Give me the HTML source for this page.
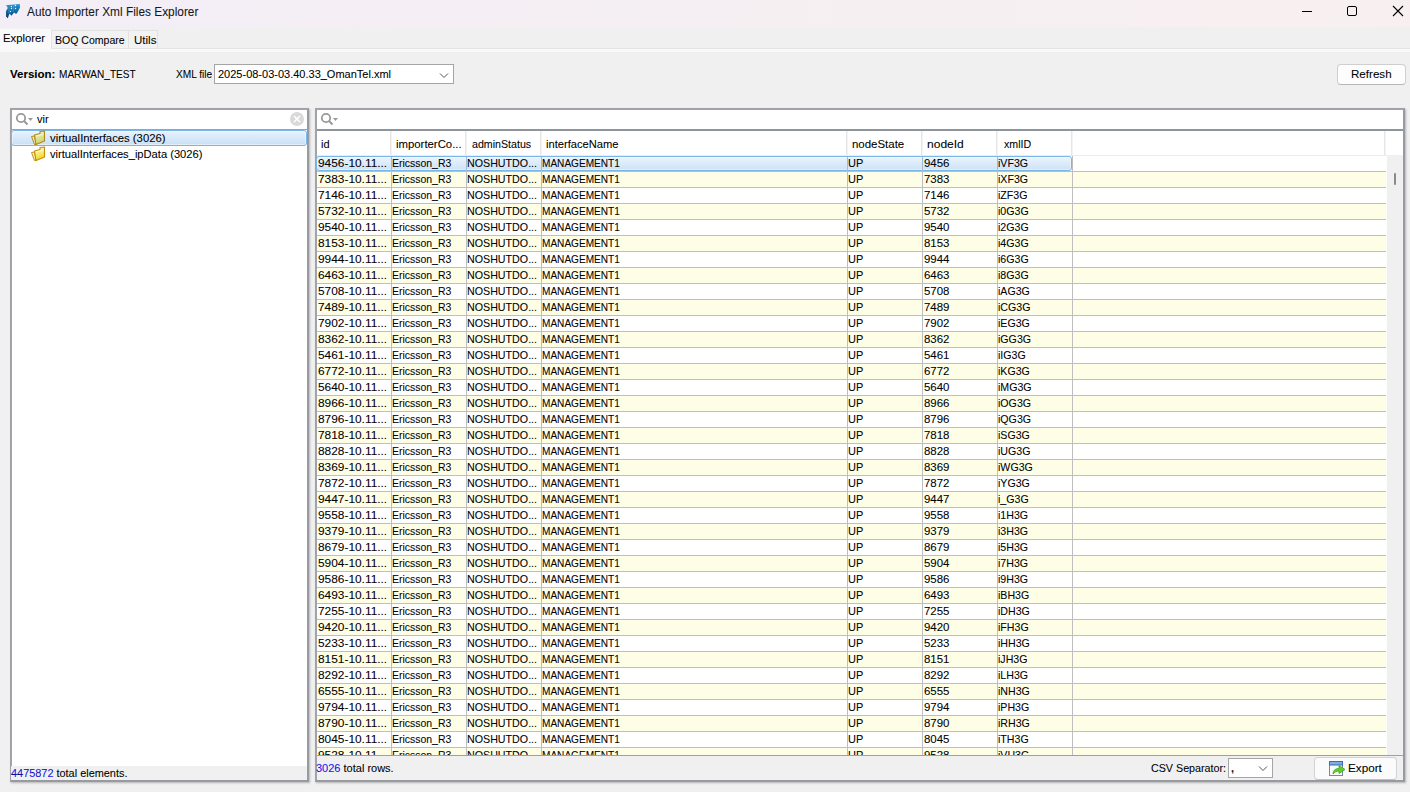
<!DOCTYPE html>
<html><head><meta charset="utf-8"><style>
*{margin:0;padding:0;box-sizing:border-box}
html,body{width:1410px;height:792px;overflow:hidden;background:#f0f0f0;font-family:"Liberation Sans",sans-serif;font-size:11px;color:#000;position:relative}
.a{position:absolute;white-space:nowrap;line-height:13px}
.t{position:absolute;white-space:nowrap;line-height:13px;transform-origin:0 0;-webkit-text-stroke:0.07px #000}
#title{position:absolute;left:0;top:0;width:1410px;height:27px;background:linear-gradient(90deg,#f3eef6 0%,#f5eff3 50%,#f8f0f0 100%)}
.tab{position:absolute;background:#f2f2f2;border:1px solid #e2e2e2;border-bottom:none}
.panel{position:absolute;background:#fff}
.row{position:absolute;left:317px;width:1069px;height:16px;background:#fff;border-bottom:1px solid #bfbfbf}
.row.alt{background:#fefee7}
.vl{position:absolute;width:1px;background:#bfbfbf}
.hl{position:absolute;height:1px}

</style></head><body>
<div id="title">
  <svg class="a" style="left:0;top:0" width="28" height="27" viewBox="0 0 28 27">
    <defs><linearGradient id="ig" x1="0" y1="0" x2="0" y2="1"><stop offset="0" stop-color="#1e9ad8"/><stop offset="1" stop-color="#08396d"/></linearGradient></defs>
    <path d="M6,5.2 L19.8,4 L20,7.5 L19,9.5 L18,11.5 L16.2,14 L14,12.5 L11.5,15.8 L9.5,13.5 L7.8,18.2 L6,16.5 L6,11 L7.6,8.5 L7.5,7 Z" fill="url(#ig)"/><path d="M9.5,6 L8.5,13 M14,5 L13,12" stroke="#8cc4ea" stroke-width="0.5" opacity="0.6"/>
    <circle cx="11.5" cy="6.5" r="0.7" fill="#fff"/><circle cx="11.5" cy="8.5" r="0.7" fill="#fff"/><circle cx="10.5" cy="11.5" r="0.7" fill="#fff"/>
    <circle cx="15.5" cy="5.5" r="0.7" fill="#fff"/><circle cx="15.5" cy="8.5" r="0.7" fill="#fff"/>
  </svg>
  <div class="t" id="ttl" style="left:27.00px;top:6px;font-size:12px;color:#1a1a1a;transform:scaleX(0.9885);">Auto Importer Xml Files Explorer</div>
  <svg class="a" style="left:1290px;top:0" width="120" height="27">
    <line x1="12" y1="11.5" x2="22" y2="11.5" stroke="#000" stroke-width="1"/>
    <rect x="57.5" y="6.5" width="9" height="9" rx="1.5" fill="none" stroke="#000" stroke-width="1"/>
    <path d="M103,6 L113,16 M113,6 L103,16" stroke="#000" stroke-width="1.1"/>
  </svg>
</div>
<!-- tabs -->
<div class="a" style="left:0;top:49px;width:1410px;height:3px;background:#f9f9f9"></div>
<div class="a" style="left:0;top:28px;width:51px;height:24px;background:#f9f9f9;border-top:1px solid #f0f0f0"></div>
<div class="t" id="tb1" style="left:2.98px;top:32px;transform:scaleX(1.0250);">Explorer</div>
<div class="tab" style="left:51px;top:30px;width:78px;height:18px"></div>
<div class="t" id="tb2" style="left:55.04px;top:34px;transform:scaleX(0.9583);">BOQ Compare</div>
<div class="tab" style="left:128px;top:30px;width:30px;height:18px"></div>
<div class="a" style="left:51px;top:48px;width:1359px;height:1px;background:#e4e4e4"></div>
<div class="t" id="tb3" style="left:133.95px;top:34px;transform:scaleX(1.0500);">Utils</div>

<!-- version row -->
<div class="t" id="ver" style="left:10.00px;top:68px;font-weight:bold;transform:scaleX(1.0465);">Version:</div>
<div class="t" id="mar" style="left:59.08px;top:68px;transform:scaleX(0.9157);">MARWAN_TEST</div>
<div class="t" id="xmlf" style="left:176.08px;top:68px;transform:scaleX(0.9211);">XML file</div>
<div class="a" style="left:214px;top:64px;width:240px;height:20px;background:#fff;border:1px solid #a5a5a5"></div>
<div class="t" id="cmb" style="left:218.00px;top:68px;">2025-08-03-03.40.33_OmanTel.xml</div>
<svg class="a" style="left:438px;top:71px" width="12" height="8"><path d="M2,2.5 L6,6.5 L10,2.5" fill="none" stroke="#555" stroke-width="1"/></svg>
<div class="a" style="left:1337px;top:64px;width:69px;height:21px;background:#fdfdfd;border:1px solid #cfcfcf;border-bottom-color:#b8b8b8;border-radius:4px"></div>
<div class="t" id="ref" style="left:1350.95px;top:68px;transform:scaleX(1.0541);">Refresh</div>

<!-- left panel -->
<div class="panel" style="left:10px;top:108px;width:299px;height:674px;border:2px solid #a0a3a8;border-right-color:#979ba1;border-bottom-color:#979ba1;box-shadow:1px 1px 2px rgba(0,0,0,0.25)"></div>
<div class="a" style="left:12px;top:129px;width:295px;height:1px;background:#a0a3a8"></div>
<svg class="a" style="left:12px;top:110px" width="26" height="18">
  <circle cx="9" cy="8" r="4.2" fill="none" stroke="#999" stroke-width="1.8"/>
  <line x1="12" y1="11" x2="15.5" y2="14.5" stroke="#999" stroke-width="2"/>
  <path d="M16,8 L21,8 L18.5,11 Z" fill="#999"/>
</svg>
<div class="t" id="vir" style="left:37.00px;top:113px;">vir</div>
<svg class="a" style="left:289px;top:111px" width="16" height="16"><circle cx="8" cy="8" r="7" fill="#d9d9d9"/><path d="M5,5 L11,11 M11,5 L5,11" stroke="#fff" stroke-width="1.6"/></svg>
<div class="a" style="left:11px;top:130px;width:296px;height:16px;border:1px solid #7ab5ea;border-radius:3px;background:linear-gradient(#e8f2fc,#c8e0f6);box-shadow:inset 0 0 0 1px rgba(255,255,255,0.45)"></div>
<svg class="a" style="left:30px;top:130px" width="16" height="32">
  <defs>
   <linearGradient id="f1" x1="0" y1="0" x2="0.3" y2="1"><stop offset="0" stop-color="#f2f5cf"/><stop offset="1" stop-color="#cfd36a"/></linearGradient>
   <linearGradient id="f2" x1="0" y1="0" x2="0.3" y2="1"><stop offset="0" stop-color="#fffde0"/><stop offset="1" stop-color="#f5d818"/></linearGradient>
  </defs>
  <g>
   <path d="M1.5,6.5 L4.5,6 L6,14.5 L4.5,14.5 Z" fill="#eef0c0" stroke="#b08a18" stroke-width="1" stroke-linejoin="round"/>
   <path d="M4.5,5 L10,3.5 L10,1.5 L14.5,1 L14.5,11 L6,14.5 Z" fill="url(#f1)" stroke="#b08a18" stroke-width="1.1" stroke-linejoin="round"/>
   <path d="M6,6 L10.5,5 L13.5,4.5" fill="none" stroke="#fafae8" stroke-width="0.8"/>
  </g>
  <g transform="translate(0,16)">
   <path d="M1.5,6.5 L4.5,6 L6,14.5 L4.5,14.5 Z" fill="#fff8c8" stroke="#c0900c" stroke-width="1" stroke-linejoin="round"/>
   <path d="M4.5,5 L10,3.5 L10,1.5 L14.5,1 L14.5,11 L6,14.5 Z" fill="url(#f2)" stroke="#c0900c" stroke-width="1.1" stroke-linejoin="round"/>
   <path d="M6,6 L10.5,5 L13.5,4.5" fill="none" stroke="#fffff0" stroke-width="0.8"/>
  </g>
</svg>
<div class="t" id="tr1" style="left:50.00px;top:132px;transform:scaleX(1.0268);">virtualInterfaces (3026)</div>
<div class="t" id="tr2" style="left:50.00px;top:148px;transform:scaleX(1.0133);">virtualInterfaces_ipData (3026)</div>
<div class="a" style="left:11px;top:766px;width:296px;height:14px;background:#f0f0f0"></div>
<div class="t" id="tot1" style="left:11.00px;top:767px;transform:scaleX(0.9915);"><span style="color:#1515f5">4475872</span> total elements.</div>

<!-- right panel -->
<div class="panel" style="left:315px;top:108px;width:1090px;height:674px;border:2px solid #a0a3a8;border-right-color:#979ba1;border-bottom-color:#979ba1;box-shadow:1px 1px 2px rgba(0,0,0,0.25)"></div>
<div class="a" style="left:317px;top:129px;width:1086px;height:2px;background:#8f959c"></div>
<svg class="a" style="left:317px;top:110px" width="26" height="18">
  <circle cx="9" cy="8" r="4.2" fill="none" stroke="#999" stroke-width="1.8"/>
  <line x1="12" y1="11" x2="15.5" y2="14.5" stroke="#999" stroke-width="2"/>
  <path d="M16,8 L21,8 L18.5,11 Z" fill="#999"/>
</svg>
<!-- header -->
<div class="a" style="left:317px;top:155px;width:1086px;height:1px;background:#ececec"></div>
<div class="a" style="left:390px;top:131px;width:1px;height:24px;background:#e6e6e6"></div><div class="a" style="left:391px;top:131px;width:1px;height:24px;background:#f3f3f3"></div>
<div class="a" style="left:465px;top:131px;width:1px;height:24px;background:#e6e6e6"></div><div class="a" style="left:466px;top:131px;width:1px;height:24px;background:#f3f3f3"></div>
<div class="a" style="left:540px;top:131px;width:1px;height:24px;background:#e6e6e6"></div><div class="a" style="left:541px;top:131px;width:1px;height:24px;background:#f3f3f3"></div>
<div class="a" style="left:846px;top:131px;width:1px;height:24px;background:#e6e6e6"></div><div class="a" style="left:847px;top:131px;width:1px;height:24px;background:#f3f3f3"></div>
<div class="a" style="left:921px;top:131px;width:1px;height:24px;background:#e6e6e6"></div><div class="a" style="left:922px;top:131px;width:1px;height:24px;background:#f3f3f3"></div>
<div class="a" style="left:996px;top:131px;width:1px;height:24px;background:#e6e6e6"></div><div class="a" style="left:997px;top:131px;width:1px;height:24px;background:#f3f3f3"></div>
<div class="a" style="left:1071px;top:131px;width:1px;height:24px;background:#e6e6e6"></div><div class="a" style="left:1072px;top:131px;width:1px;height:24px;background:#f3f3f3"></div>
<div class="a" style="left:1384px;top:131px;width:1px;height:24px;background:#e6e6e6"></div><div class="a" style="left:1385px;top:131px;width:1px;height:24px;background:#f3f3f3"></div>
<div class="t" id="h0" style="left:321.00px;top:138px;">id</div>
<div class="t" id="h1" style="left:395.97px;top:138px;transform:scaleX(1.0323);">importerCo...</div>
<div class="t" id="h2" style="left:472.00px;top:138px;transform:scaleX(0.9672);">adminStatus</div>
<div class="t" id="h3" style="left:545.99px;top:138px;transform:scaleX(1.0143);">interfaceName</div>
<div class="t" id="h4" style="left:851.96px;top:138px;transform:scaleX(1.0408);">nodeState</div>
<div class="t" id="h5" style="left:926.91px;top:138px;transform:scaleX(1.0938);">nodeId</div>
<div class="t" id="h6" style="left:1004.00px;top:138px;transform:scaleX(0.9643);">xmlID</div>
<!-- table body clip -->
<div class="a" style="left:316px;top:156px;width:1070px;height:599px;overflow:hidden">
<div class="a" style="left:1px;top:15px;width:1069px;height:1px;background:#bfbfbf"></div>
<div class="a" style="left:1px;top:16px;width:1069px;height:15px;background:#fefee7"></div>
<div class="a" style="left:1px;top:31px;width:1069px;height:1px;background:#bfbfbf"></div>
<div class="a" style="left:1px;top:47px;width:1069px;height:1px;background:#bfbfbf"></div>
<div class="a" style="left:1px;top:48px;width:1069px;height:15px;background:#fefee7"></div>
<div class="a" style="left:1px;top:63px;width:1069px;height:1px;background:#bfbfbf"></div>
<div class="a" style="left:1px;top:79px;width:1069px;height:1px;background:#bfbfbf"></div>
<div class="a" style="left:1px;top:80px;width:1069px;height:15px;background:#fefee7"></div>
<div class="a" style="left:1px;top:95px;width:1069px;height:1px;background:#bfbfbf"></div>
<div class="a" style="left:1px;top:111px;width:1069px;height:1px;background:#bfbfbf"></div>
<div class="a" style="left:1px;top:112px;width:1069px;height:15px;background:#fefee7"></div>
<div class="a" style="left:1px;top:127px;width:1069px;height:1px;background:#bfbfbf"></div>
<div class="a" style="left:1px;top:143px;width:1069px;height:1px;background:#bfbfbf"></div>
<div class="a" style="left:1px;top:144px;width:1069px;height:15px;background:#fefee7"></div>
<div class="a" style="left:1px;top:159px;width:1069px;height:1px;background:#bfbfbf"></div>
<div class="a" style="left:1px;top:175px;width:1069px;height:1px;background:#bfbfbf"></div>
<div class="a" style="left:1px;top:176px;width:1069px;height:15px;background:#fefee7"></div>
<div class="a" style="left:1px;top:191px;width:1069px;height:1px;background:#bfbfbf"></div>
<div class="a" style="left:1px;top:207px;width:1069px;height:1px;background:#bfbfbf"></div>
<div class="a" style="left:1px;top:208px;width:1069px;height:15px;background:#fefee7"></div>
<div class="a" style="left:1px;top:223px;width:1069px;height:1px;background:#bfbfbf"></div>
<div class="a" style="left:1px;top:239px;width:1069px;height:1px;background:#bfbfbf"></div>
<div class="a" style="left:1px;top:240px;width:1069px;height:15px;background:#fefee7"></div>
<div class="a" style="left:1px;top:255px;width:1069px;height:1px;background:#bfbfbf"></div>
<div class="a" style="left:1px;top:271px;width:1069px;height:1px;background:#bfbfbf"></div>
<div class="a" style="left:1px;top:272px;width:1069px;height:15px;background:#fefee7"></div>
<div class="a" style="left:1px;top:287px;width:1069px;height:1px;background:#bfbfbf"></div>
<div class="a" style="left:1px;top:303px;width:1069px;height:1px;background:#bfbfbf"></div>
<div class="a" style="left:1px;top:304px;width:1069px;height:15px;background:#fefee7"></div>
<div class="a" style="left:1px;top:319px;width:1069px;height:1px;background:#bfbfbf"></div>
<div class="a" style="left:1px;top:335px;width:1069px;height:1px;background:#bfbfbf"></div>
<div class="a" style="left:1px;top:336px;width:1069px;height:15px;background:#fefee7"></div>
<div class="a" style="left:1px;top:351px;width:1069px;height:1px;background:#bfbfbf"></div>
<div class="a" style="left:1px;top:367px;width:1069px;height:1px;background:#bfbfbf"></div>
<div class="a" style="left:1px;top:368px;width:1069px;height:15px;background:#fefee7"></div>
<div class="a" style="left:1px;top:383px;width:1069px;height:1px;background:#bfbfbf"></div>
<div class="a" style="left:1px;top:399px;width:1069px;height:1px;background:#bfbfbf"></div>
<div class="a" style="left:1px;top:400px;width:1069px;height:15px;background:#fefee7"></div>
<div class="a" style="left:1px;top:415px;width:1069px;height:1px;background:#bfbfbf"></div>
<div class="a" style="left:1px;top:431px;width:1069px;height:1px;background:#bfbfbf"></div>
<div class="a" style="left:1px;top:432px;width:1069px;height:15px;background:#fefee7"></div>
<div class="a" style="left:1px;top:447px;width:1069px;height:1px;background:#bfbfbf"></div>
<div class="a" style="left:1px;top:463px;width:1069px;height:1px;background:#bfbfbf"></div>
<div class="a" style="left:1px;top:464px;width:1069px;height:15px;background:#fefee7"></div>
<div class="a" style="left:1px;top:479px;width:1069px;height:1px;background:#bfbfbf"></div>
<div class="a" style="left:1px;top:495px;width:1069px;height:1px;background:#bfbfbf"></div>
<div class="a" style="left:1px;top:496px;width:1069px;height:15px;background:#fefee7"></div>
<div class="a" style="left:1px;top:511px;width:1069px;height:1px;background:#bfbfbf"></div>
<div class="a" style="left:1px;top:527px;width:1069px;height:1px;background:#bfbfbf"></div>
<div class="a" style="left:1px;top:528px;width:1069px;height:15px;background:#fefee7"></div>
<div class="a" style="left:1px;top:543px;width:1069px;height:1px;background:#bfbfbf"></div>
<div class="a" style="left:1px;top:559px;width:1069px;height:1px;background:#bfbfbf"></div>
<div class="a" style="left:1px;top:560px;width:1069px;height:15px;background:#fefee7"></div>
<div class="a" style="left:1px;top:575px;width:1069px;height:1px;background:#bfbfbf"></div>
<div class="a" style="left:1px;top:591px;width:1069px;height:1px;background:#bfbfbf"></div>
<div class="a" style="left:1px;top:592px;width:1069px;height:15px;background:#fefee7"></div>
<div class="a" style="left:1px;top:607px;width:1069px;height:1px;background:#bfbfbf"></div>
<div class="a" style="left:0;top:0;width:756px;height:15px;border:1px solid #7ab5ea;border-radius:3px;background:linear-gradient(#ebf4fc,#cce2f7);box-shadow:inset 0 0 0 1px rgba(255,255,255,0.45)"></div>
<div class="a" style="left:75px;top:15px;width:1px;height:600px;background:#bfbfbf"></div>
<div class="a" style="left:75px;top:1px;width:1px;height:14px;background:#a6bbd0"></div>
<div class="a" style="left:150px;top:15px;width:1px;height:600px;background:#bfbfbf"></div>
<div class="a" style="left:150px;top:1px;width:1px;height:14px;background:#a6bbd0"></div>
<div class="a" style="left:225px;top:15px;width:1px;height:600px;background:#bfbfbf"></div>
<div class="a" style="left:225px;top:1px;width:1px;height:14px;background:#a6bbd0"></div>
<div class="a" style="left:531px;top:15px;width:1px;height:600px;background:#bfbfbf"></div>
<div class="a" style="left:531px;top:1px;width:1px;height:14px;background:#a6bbd0"></div>
<div class="a" style="left:606px;top:15px;width:1px;height:600px;background:#bfbfbf"></div>
<div class="a" style="left:606px;top:1px;width:1px;height:14px;background:#a6bbd0"></div>
<div class="a" style="left:681px;top:15px;width:1px;height:600px;background:#bfbfbf"></div>
<div class="a" style="left:681px;top:1px;width:1px;height:14px;background:#a6bbd0"></div>
<div class="a" style="left:756px;top:15px;width:1px;height:600px;background:#bfbfbf"></div>
<div class="a" style="left:756px;top:0;width:1px;height:15px;background:#bfbfbf"></div>
<div class="t c0" style="left:2px;top:1px;transform:scaleX(1.0806);">9456-10.11...</div>
<div class="t c1" style="left:76px;top:1px;transform:scaleX(0.9508);">Ericsson_R3</div>
<div class="t c2" style="left:151px;top:1px;transform:scaleX(0.9714);">NOSHUTDO...</div>
<div class="t c3" style="left:226px;top:1px;transform:scaleX(0.9157);">MANAGEMENT1</div>
<div class="t c4" style="left:532px;top:1px;">UP</div>
<div class="t c5" style="left:608px;top:1px;transform:scaleX(1.0417);">9456</div>
<div class="t c6" style="left:682px;top:1px;transform:scaleX(0.9655);">iVF3G</div>
<div class="t c0" style="left:2px;top:17px;transform:scaleX(1.0806);">7383-10.11...</div>
<div class="t c1" style="left:76px;top:17px;transform:scaleX(0.9508);">Ericsson_R3</div>
<div class="t c2" style="left:151px;top:17px;transform:scaleX(0.9714);">NOSHUTDO...</div>
<div class="t c3" style="left:226px;top:17px;transform:scaleX(0.9157);">MANAGEMENT1</div>
<div class="t c4" style="left:532px;top:17px;">UP</div>
<div class="t c5" style="left:608px;top:17px;transform:scaleX(1.0417);">7383</div>
<div class="t c6" style="left:682px;top:17px;transform:scaleX(0.9655);">iXF3G</div>
<div class="t c0" style="left:2px;top:33px;transform:scaleX(1.0806);">7146-10.11...</div>
<div class="t c1" style="left:76px;top:33px;transform:scaleX(0.9508);">Ericsson_R3</div>
<div class="t c2" style="left:151px;top:33px;transform:scaleX(0.9714);">NOSHUTDO...</div>
<div class="t c3" style="left:226px;top:33px;transform:scaleX(0.9157);">MANAGEMENT1</div>
<div class="t c4" style="left:532px;top:33px;">UP</div>
<div class="t c5" style="left:608px;top:33px;transform:scaleX(1.0417);">7146</div>
<div class="t c6" style="left:682px;top:33px;transform:scaleX(0.9655);">iZF3G</div>
<div class="t c0" style="left:2px;top:49px;transform:scaleX(1.0806);">5732-10.11...</div>
<div class="t c1" style="left:76px;top:49px;transform:scaleX(0.9508);">Ericsson_R3</div>
<div class="t c2" style="left:151px;top:49px;transform:scaleX(0.9714);">NOSHUTDO...</div>
<div class="t c3" style="left:226px;top:49px;transform:scaleX(0.9157);">MANAGEMENT1</div>
<div class="t c4" style="left:532px;top:49px;">UP</div>
<div class="t c5" style="left:608px;top:49px;transform:scaleX(1.0417);">5732</div>
<div class="t c6" style="left:682px;top:49px;transform:scaleX(0.9655);">i0G3G</div>
<div class="t c0" style="left:2px;top:65px;transform:scaleX(1.0806);">9540-10.11...</div>
<div class="t c1" style="left:76px;top:65px;transform:scaleX(0.9508);">Ericsson_R3</div>
<div class="t c2" style="left:151px;top:65px;transform:scaleX(0.9714);">NOSHUTDO...</div>
<div class="t c3" style="left:226px;top:65px;transform:scaleX(0.9157);">MANAGEMENT1</div>
<div class="t c4" style="left:532px;top:65px;">UP</div>
<div class="t c5" style="left:608px;top:65px;transform:scaleX(1.0417);">9540</div>
<div class="t c6" style="left:682px;top:65px;transform:scaleX(0.9655);">i2G3G</div>
<div class="t c0" style="left:2px;top:81px;transform:scaleX(1.0806);">8153-10.11...</div>
<div class="t c1" style="left:76px;top:81px;transform:scaleX(0.9508);">Ericsson_R3</div>
<div class="t c2" style="left:151px;top:81px;transform:scaleX(0.9714);">NOSHUTDO...</div>
<div class="t c3" style="left:226px;top:81px;transform:scaleX(0.9157);">MANAGEMENT1</div>
<div class="t c4" style="left:532px;top:81px;">UP</div>
<div class="t c5" style="left:608px;top:81px;transform:scaleX(1.0417);">8153</div>
<div class="t c6" style="left:682px;top:81px;transform:scaleX(0.9655);">i4G3G</div>
<div class="t c0" style="left:2px;top:97px;transform:scaleX(1.0806);">9944-10.11...</div>
<div class="t c1" style="left:76px;top:97px;transform:scaleX(0.9508);">Ericsson_R3</div>
<div class="t c2" style="left:151px;top:97px;transform:scaleX(0.9714);">NOSHUTDO...</div>
<div class="t c3" style="left:226px;top:97px;transform:scaleX(0.9157);">MANAGEMENT1</div>
<div class="t c4" style="left:532px;top:97px;">UP</div>
<div class="t c5" style="left:608px;top:97px;transform:scaleX(1.0417);">9944</div>
<div class="t c6" style="left:682px;top:97px;transform:scaleX(0.9655);">i6G3G</div>
<div class="t c0" style="left:2px;top:113px;transform:scaleX(1.0806);">6463-10.11...</div>
<div class="t c1" style="left:76px;top:113px;transform:scaleX(0.9508);">Ericsson_R3</div>
<div class="t c2" style="left:151px;top:113px;transform:scaleX(0.9714);">NOSHUTDO...</div>
<div class="t c3" style="left:226px;top:113px;transform:scaleX(0.9157);">MANAGEMENT1</div>
<div class="t c4" style="left:532px;top:113px;">UP</div>
<div class="t c5" style="left:608px;top:113px;transform:scaleX(1.0417);">6463</div>
<div class="t c6" style="left:682px;top:113px;transform:scaleX(0.9655);">i8G3G</div>
<div class="t c0" style="left:2px;top:129px;transform:scaleX(1.0806);">5708-10.11...</div>
<div class="t c1" style="left:76px;top:129px;transform:scaleX(0.9508);">Ericsson_R3</div>
<div class="t c2" style="left:151px;top:129px;transform:scaleX(0.9714);">NOSHUTDO...</div>
<div class="t c3" style="left:226px;top:129px;transform:scaleX(0.9157);">MANAGEMENT1</div>
<div class="t c4" style="left:532px;top:129px;">UP</div>
<div class="t c5" style="left:608px;top:129px;transform:scaleX(1.0417);">5708</div>
<div class="t c6" style="left:682px;top:129px;transform:scaleX(0.9655);">iAG3G</div>
<div class="t c0" style="left:2px;top:145px;transform:scaleX(1.0806);">7489-10.11...</div>
<div class="t c1" style="left:76px;top:145px;transform:scaleX(0.9508);">Ericsson_R3</div>
<div class="t c2" style="left:151px;top:145px;transform:scaleX(0.9714);">NOSHUTDO...</div>
<div class="t c3" style="left:226px;top:145px;transform:scaleX(0.9157);">MANAGEMENT1</div>
<div class="t c4" style="left:532px;top:145px;">UP</div>
<div class="t c5" style="left:608px;top:145px;transform:scaleX(1.0417);">7489</div>
<div class="t c6" style="left:682px;top:145px;transform:scaleX(0.9655);">iCG3G</div>
<div class="t c0" style="left:2px;top:161px;transform:scaleX(1.0806);">7902-10.11...</div>
<div class="t c1" style="left:76px;top:161px;transform:scaleX(0.9508);">Ericsson_R3</div>
<div class="t c2" style="left:151px;top:161px;transform:scaleX(0.9714);">NOSHUTDO...</div>
<div class="t c3" style="left:226px;top:161px;transform:scaleX(0.9157);">MANAGEMENT1</div>
<div class="t c4" style="left:532px;top:161px;">UP</div>
<div class="t c5" style="left:608px;top:161px;transform:scaleX(1.0417);">7902</div>
<div class="t c6" style="left:682px;top:161px;transform:scaleX(0.9655);">iEG3G</div>
<div class="t c0" style="left:2px;top:177px;transform:scaleX(1.0806);">8362-10.11...</div>
<div class="t c1" style="left:76px;top:177px;transform:scaleX(0.9508);">Ericsson_R3</div>
<div class="t c2" style="left:151px;top:177px;transform:scaleX(0.9714);">NOSHUTDO...</div>
<div class="t c3" style="left:226px;top:177px;transform:scaleX(0.9157);">MANAGEMENT1</div>
<div class="t c4" style="left:532px;top:177px;">UP</div>
<div class="t c5" style="left:608px;top:177px;transform:scaleX(1.0417);">8362</div>
<div class="t c6" style="left:682px;top:177px;transform:scaleX(0.9655);">iGG3G</div>
<div class="t c0" style="left:2px;top:193px;transform:scaleX(1.0806);">5461-10.11...</div>
<div class="t c1" style="left:76px;top:193px;transform:scaleX(0.9508);">Ericsson_R3</div>
<div class="t c2" style="left:151px;top:193px;transform:scaleX(0.9714);">NOSHUTDO...</div>
<div class="t c3" style="left:226px;top:193px;transform:scaleX(0.9157);">MANAGEMENT1</div>
<div class="t c4" style="left:532px;top:193px;">UP</div>
<div class="t c5" style="left:608px;top:193px;transform:scaleX(1.0417);">5461</div>
<div class="t c6" style="left:682px;top:193px;transform:scaleX(0.9655);">iIG3G</div>
<div class="t c0" style="left:2px;top:209px;transform:scaleX(1.0806);">6772-10.11...</div>
<div class="t c1" style="left:76px;top:209px;transform:scaleX(0.9508);">Ericsson_R3</div>
<div class="t c2" style="left:151px;top:209px;transform:scaleX(0.9714);">NOSHUTDO...</div>
<div class="t c3" style="left:226px;top:209px;transform:scaleX(0.9157);">MANAGEMENT1</div>
<div class="t c4" style="left:532px;top:209px;">UP</div>
<div class="t c5" style="left:608px;top:209px;transform:scaleX(1.0417);">6772</div>
<div class="t c6" style="left:682px;top:209px;transform:scaleX(0.9655);">iKG3G</div>
<div class="t c0" style="left:2px;top:225px;transform:scaleX(1.0806);">5640-10.11...</div>
<div class="t c1" style="left:76px;top:225px;transform:scaleX(0.9508);">Ericsson_R3</div>
<div class="t c2" style="left:151px;top:225px;transform:scaleX(0.9714);">NOSHUTDO...</div>
<div class="t c3" style="left:226px;top:225px;transform:scaleX(0.9157);">MANAGEMENT1</div>
<div class="t c4" style="left:532px;top:225px;">UP</div>
<div class="t c5" style="left:608px;top:225px;transform:scaleX(1.0417);">5640</div>
<div class="t c6" style="left:682px;top:225px;transform:scaleX(0.9655);">iMG3G</div>
<div class="t c0" style="left:2px;top:241px;transform:scaleX(1.0806);">8966-10.11...</div>
<div class="t c1" style="left:76px;top:241px;transform:scaleX(0.9508);">Ericsson_R3</div>
<div class="t c2" style="left:151px;top:241px;transform:scaleX(0.9714);">NOSHUTDO...</div>
<div class="t c3" style="left:226px;top:241px;transform:scaleX(0.9157);">MANAGEMENT1</div>
<div class="t c4" style="left:532px;top:241px;">UP</div>
<div class="t c5" style="left:608px;top:241px;transform:scaleX(1.0417);">8966</div>
<div class="t c6" style="left:682px;top:241px;transform:scaleX(0.9655);">iOG3G</div>
<div class="t c0" style="left:2px;top:257px;transform:scaleX(1.0806);">8796-10.11...</div>
<div class="t c1" style="left:76px;top:257px;transform:scaleX(0.9508);">Ericsson_R3</div>
<div class="t c2" style="left:151px;top:257px;transform:scaleX(0.9714);">NOSHUTDO...</div>
<div class="t c3" style="left:226px;top:257px;transform:scaleX(0.9157);">MANAGEMENT1</div>
<div class="t c4" style="left:532px;top:257px;">UP</div>
<div class="t c5" style="left:608px;top:257px;transform:scaleX(1.0417);">8796</div>
<div class="t c6" style="left:682px;top:257px;transform:scaleX(0.9655);">iQG3G</div>
<div class="t c0" style="left:2px;top:273px;transform:scaleX(1.0806);">7818-10.11...</div>
<div class="t c1" style="left:76px;top:273px;transform:scaleX(0.9508);">Ericsson_R3</div>
<div class="t c2" style="left:151px;top:273px;transform:scaleX(0.9714);">NOSHUTDO...</div>
<div class="t c3" style="left:226px;top:273px;transform:scaleX(0.9157);">MANAGEMENT1</div>
<div class="t c4" style="left:532px;top:273px;">UP</div>
<div class="t c5" style="left:608px;top:273px;transform:scaleX(1.0417);">7818</div>
<div class="t c6" style="left:682px;top:273px;transform:scaleX(0.9655);">iSG3G</div>
<div class="t c0" style="left:2px;top:289px;transform:scaleX(1.0806);">8828-10.11...</div>
<div class="t c1" style="left:76px;top:289px;transform:scaleX(0.9508);">Ericsson_R3</div>
<div class="t c2" style="left:151px;top:289px;transform:scaleX(0.9714);">NOSHUTDO...</div>
<div class="t c3" style="left:226px;top:289px;transform:scaleX(0.9157);">MANAGEMENT1</div>
<div class="t c4" style="left:532px;top:289px;">UP</div>
<div class="t c5" style="left:608px;top:289px;transform:scaleX(1.0417);">8828</div>
<div class="t c6" style="left:682px;top:289px;transform:scaleX(0.9655);">iUG3G</div>
<div class="t c0" style="left:2px;top:305px;transform:scaleX(1.0806);">8369-10.11...</div>
<div class="t c1" style="left:76px;top:305px;transform:scaleX(0.9508);">Ericsson_R3</div>
<div class="t c2" style="left:151px;top:305px;transform:scaleX(0.9714);">NOSHUTDO...</div>
<div class="t c3" style="left:226px;top:305px;transform:scaleX(0.9157);">MANAGEMENT1</div>
<div class="t c4" style="left:532px;top:305px;">UP</div>
<div class="t c5" style="left:608px;top:305px;transform:scaleX(1.0417);">8369</div>
<div class="t c6" style="left:682px;top:305px;transform:scaleX(0.9655);">iWG3G</div>
<div class="t c0" style="left:2px;top:321px;transform:scaleX(1.0806);">7872-10.11...</div>
<div class="t c1" style="left:76px;top:321px;transform:scaleX(0.9508);">Ericsson_R3</div>
<div class="t c2" style="left:151px;top:321px;transform:scaleX(0.9714);">NOSHUTDO...</div>
<div class="t c3" style="left:226px;top:321px;transform:scaleX(0.9157);">MANAGEMENT1</div>
<div class="t c4" style="left:532px;top:321px;">UP</div>
<div class="t c5" style="left:608px;top:321px;transform:scaleX(1.0417);">7872</div>
<div class="t c6" style="left:682px;top:321px;transform:scaleX(0.9655);">iYG3G</div>
<div class="t c0" style="left:2px;top:337px;transform:scaleX(1.0806);">9447-10.11...</div>
<div class="t c1" style="left:76px;top:337px;transform:scaleX(0.9508);">Ericsson_R3</div>
<div class="t c2" style="left:151px;top:337px;transform:scaleX(0.9714);">NOSHUTDO...</div>
<div class="t c3" style="left:226px;top:337px;transform:scaleX(0.9157);">MANAGEMENT1</div>
<div class="t c4" style="left:532px;top:337px;">UP</div>
<div class="t c5" style="left:608px;top:337px;transform:scaleX(1.0417);">9447</div>
<div class="t c6" style="left:682px;top:337px;transform:scaleX(0.9655);">i_G3G</div>
<div class="t c0" style="left:2px;top:353px;transform:scaleX(1.0806);">9558-10.11...</div>
<div class="t c1" style="left:76px;top:353px;transform:scaleX(0.9508);">Ericsson_R3</div>
<div class="t c2" style="left:151px;top:353px;transform:scaleX(0.9714);">NOSHUTDO...</div>
<div class="t c3" style="left:226px;top:353px;transform:scaleX(0.9157);">MANAGEMENT1</div>
<div class="t c4" style="left:532px;top:353px;">UP</div>
<div class="t c5" style="left:608px;top:353px;transform:scaleX(1.0417);">9558</div>
<div class="t c6" style="left:682px;top:353px;transform:scaleX(0.9655);">i1H3G</div>
<div class="t c0" style="left:2px;top:369px;transform:scaleX(1.0806);">9379-10.11...</div>
<div class="t c1" style="left:76px;top:369px;transform:scaleX(0.9508);">Ericsson_R3</div>
<div class="t c2" style="left:151px;top:369px;transform:scaleX(0.9714);">NOSHUTDO...</div>
<div class="t c3" style="left:226px;top:369px;transform:scaleX(0.9157);">MANAGEMENT1</div>
<div class="t c4" style="left:532px;top:369px;">UP</div>
<div class="t c5" style="left:608px;top:369px;transform:scaleX(1.0417);">9379</div>
<div class="t c6" style="left:682px;top:369px;transform:scaleX(0.9655);">i3H3G</div>
<div class="t c0" style="left:2px;top:385px;transform:scaleX(1.0806);">8679-10.11...</div>
<div class="t c1" style="left:76px;top:385px;transform:scaleX(0.9508);">Ericsson_R3</div>
<div class="t c2" style="left:151px;top:385px;transform:scaleX(0.9714);">NOSHUTDO...</div>
<div class="t c3" style="left:226px;top:385px;transform:scaleX(0.9157);">MANAGEMENT1</div>
<div class="t c4" style="left:532px;top:385px;">UP</div>
<div class="t c5" style="left:608px;top:385px;transform:scaleX(1.0417);">8679</div>
<div class="t c6" style="left:682px;top:385px;transform:scaleX(0.9655);">i5H3G</div>
<div class="t c0" style="left:2px;top:401px;transform:scaleX(1.0806);">5904-10.11...</div>
<div class="t c1" style="left:76px;top:401px;transform:scaleX(0.9508);">Ericsson_R3</div>
<div class="t c2" style="left:151px;top:401px;transform:scaleX(0.9714);">NOSHUTDO...</div>
<div class="t c3" style="left:226px;top:401px;transform:scaleX(0.9157);">MANAGEMENT1</div>
<div class="t c4" style="left:532px;top:401px;">UP</div>
<div class="t c5" style="left:608px;top:401px;transform:scaleX(1.0417);">5904</div>
<div class="t c6" style="left:682px;top:401px;transform:scaleX(0.9655);">i7H3G</div>
<div class="t c0" style="left:2px;top:417px;transform:scaleX(1.0806);">9586-10.11...</div>
<div class="t c1" style="left:76px;top:417px;transform:scaleX(0.9508);">Ericsson_R3</div>
<div class="t c2" style="left:151px;top:417px;transform:scaleX(0.9714);">NOSHUTDO...</div>
<div class="t c3" style="left:226px;top:417px;transform:scaleX(0.9157);">MANAGEMENT1</div>
<div class="t c4" style="left:532px;top:417px;">UP</div>
<div class="t c5" style="left:608px;top:417px;transform:scaleX(1.0417);">9586</div>
<div class="t c6" style="left:682px;top:417px;transform:scaleX(0.9655);">i9H3G</div>
<div class="t c0" style="left:2px;top:433px;transform:scaleX(1.0806);">6493-10.11...</div>
<div class="t c1" style="left:76px;top:433px;transform:scaleX(0.9508);">Ericsson_R3</div>
<div class="t c2" style="left:151px;top:433px;transform:scaleX(0.9714);">NOSHUTDO...</div>
<div class="t c3" style="left:226px;top:433px;transform:scaleX(0.9157);">MANAGEMENT1</div>
<div class="t c4" style="left:532px;top:433px;">UP</div>
<div class="t c5" style="left:608px;top:433px;transform:scaleX(1.0417);">6493</div>
<div class="t c6" style="left:682px;top:433px;transform:scaleX(0.9655);">iBH3G</div>
<div class="t c0" style="left:2px;top:449px;transform:scaleX(1.0806);">7255-10.11...</div>
<div class="t c1" style="left:76px;top:449px;transform:scaleX(0.9508);">Ericsson_R3</div>
<div class="t c2" style="left:151px;top:449px;transform:scaleX(0.9714);">NOSHUTDO...</div>
<div class="t c3" style="left:226px;top:449px;transform:scaleX(0.9157);">MANAGEMENT1</div>
<div class="t c4" style="left:532px;top:449px;">UP</div>
<div class="t c5" style="left:608px;top:449px;transform:scaleX(1.0417);">7255</div>
<div class="t c6" style="left:682px;top:449px;transform:scaleX(0.9655);">iDH3G</div>
<div class="t c0" style="left:2px;top:465px;transform:scaleX(1.0806);">9420-10.11...</div>
<div class="t c1" style="left:76px;top:465px;transform:scaleX(0.9508);">Ericsson_R3</div>
<div class="t c2" style="left:151px;top:465px;transform:scaleX(0.9714);">NOSHUTDO...</div>
<div class="t c3" style="left:226px;top:465px;transform:scaleX(0.9157);">MANAGEMENT1</div>
<div class="t c4" style="left:532px;top:465px;">UP</div>
<div class="t c5" style="left:608px;top:465px;transform:scaleX(1.0417);">9420</div>
<div class="t c6" style="left:682px;top:465px;transform:scaleX(0.9655);">iFH3G</div>
<div class="t c0" style="left:2px;top:481px;transform:scaleX(1.0806);">5233-10.11...</div>
<div class="t c1" style="left:76px;top:481px;transform:scaleX(0.9508);">Ericsson_R3</div>
<div class="t c2" style="left:151px;top:481px;transform:scaleX(0.9714);">NOSHUTDO...</div>
<div class="t c3" style="left:226px;top:481px;transform:scaleX(0.9157);">MANAGEMENT1</div>
<div class="t c4" style="left:532px;top:481px;">UP</div>
<div class="t c5" style="left:608px;top:481px;transform:scaleX(1.0417);">5233</div>
<div class="t c6" style="left:682px;top:481px;transform:scaleX(0.9655);">iHH3G</div>
<div class="t c0" style="left:2px;top:497px;transform:scaleX(1.0806);">8151-10.11...</div>
<div class="t c1" style="left:76px;top:497px;transform:scaleX(0.9508);">Ericsson_R3</div>
<div class="t c2" style="left:151px;top:497px;transform:scaleX(0.9714);">NOSHUTDO...</div>
<div class="t c3" style="left:226px;top:497px;transform:scaleX(0.9157);">MANAGEMENT1</div>
<div class="t c4" style="left:532px;top:497px;">UP</div>
<div class="t c5" style="left:608px;top:497px;transform:scaleX(1.0417);">8151</div>
<div class="t c6" style="left:682px;top:497px;transform:scaleX(0.9655);">iJH3G</div>
<div class="t c0" style="left:2px;top:513px;transform:scaleX(1.0806);">8292-10.11...</div>
<div class="t c1" style="left:76px;top:513px;transform:scaleX(0.9508);">Ericsson_R3</div>
<div class="t c2" style="left:151px;top:513px;transform:scaleX(0.9714);">NOSHUTDO...</div>
<div class="t c3" style="left:226px;top:513px;transform:scaleX(0.9157);">MANAGEMENT1</div>
<div class="t c4" style="left:532px;top:513px;">UP</div>
<div class="t c5" style="left:608px;top:513px;transform:scaleX(1.0417);">8292</div>
<div class="t c6" style="left:682px;top:513px;transform:scaleX(0.9655);">iLH3G</div>
<div class="t c0" style="left:2px;top:529px;transform:scaleX(1.0806);">6555-10.11...</div>
<div class="t c1" style="left:76px;top:529px;transform:scaleX(0.9508);">Ericsson_R3</div>
<div class="t c2" style="left:151px;top:529px;transform:scaleX(0.9714);">NOSHUTDO...</div>
<div class="t c3" style="left:226px;top:529px;transform:scaleX(0.9157);">MANAGEMENT1</div>
<div class="t c4" style="left:532px;top:529px;">UP</div>
<div class="t c5" style="left:608px;top:529px;transform:scaleX(1.0417);">6555</div>
<div class="t c6" style="left:682px;top:529px;transform:scaleX(0.9655);">iNH3G</div>
<div class="t c0" style="left:2px;top:545px;transform:scaleX(1.0806);">9794-10.11...</div>
<div class="t c1" style="left:76px;top:545px;transform:scaleX(0.9508);">Ericsson_R3</div>
<div class="t c2" style="left:151px;top:545px;transform:scaleX(0.9714);">NOSHUTDO...</div>
<div class="t c3" style="left:226px;top:545px;transform:scaleX(0.9157);">MANAGEMENT1</div>
<div class="t c4" style="left:532px;top:545px;">UP</div>
<div class="t c5" style="left:608px;top:545px;transform:scaleX(1.0417);">9794</div>
<div class="t c6" style="left:682px;top:545px;transform:scaleX(0.9655);">iPH3G</div>
<div class="t c0" style="left:2px;top:561px;transform:scaleX(1.0806);">8790-10.11...</div>
<div class="t c1" style="left:76px;top:561px;transform:scaleX(0.9508);">Ericsson_R3</div>
<div class="t c2" style="left:151px;top:561px;transform:scaleX(0.9714);">NOSHUTDO...</div>
<div class="t c3" style="left:226px;top:561px;transform:scaleX(0.9157);">MANAGEMENT1</div>
<div class="t c4" style="left:532px;top:561px;">UP</div>
<div class="t c5" style="left:608px;top:561px;transform:scaleX(1.0417);">8790</div>
<div class="t c6" style="left:682px;top:561px;transform:scaleX(0.9655);">iRH3G</div>
<div class="t c0" style="left:2px;top:577px;transform:scaleX(1.0806);">8045-10.11...</div>
<div class="t c1" style="left:76px;top:577px;transform:scaleX(0.9508);">Ericsson_R3</div>
<div class="t c2" style="left:151px;top:577px;transform:scaleX(0.9714);">NOSHUTDO...</div>
<div class="t c3" style="left:226px;top:577px;transform:scaleX(0.9157);">MANAGEMENT1</div>
<div class="t c4" style="left:532px;top:577px;">UP</div>
<div class="t c5" style="left:608px;top:577px;transform:scaleX(1.0417);">8045</div>
<div class="t c6" style="left:682px;top:577px;transform:scaleX(0.9655);">iTH3G</div>
<div class="t c0" style="left:2px;top:593px;transform:scaleX(1.0806);">9528-10.11...</div>
<div class="t c1" style="left:76px;top:593px;transform:scaleX(0.9508);">Ericsson_R3</div>
<div class="t c2" style="left:151px;top:593px;transform:scaleX(0.9714);">NOSHUTDO...</div>
<div class="t c3" style="left:226px;top:593px;transform:scaleX(0.9157);">MANAGEMENT1</div>
<div class="t c4" style="left:532px;top:593px;">UP</div>
<div class="t c5" style="left:608px;top:593px;transform:scaleX(1.0417);">9528</div>
<div class="t c6" style="left:682px;top:593px;transform:scaleX(0.9655);">iVH3G</div>
</div>
<div class="a" style="left:1386px;top:156px;width:1px;height:599px;background:#fff"></div><div class="a" style="left:1387px;top:155px;width:16px;height:600px;background:#f0f0f0"></div>
<div class="a" style="left:1394px;top:173px;width:2px;height:12px;background:#8a8a8a;border-radius:1px"></div>
<div class="a" style="left:317px;top:755px;width:1086px;height:25px;background:#f0f0f0;border-top:1px solid #9aa0a6"></div>
<div class="t" id="tot2" style="left:316px;top:762px;"><span style="color:#1515f5">3026</span> total rows.</div>
<div class="t" id="csv" style="left:1151.03px;top:762px;transform:scaleX(0.9733);">CSV Separator:</div>
<div class="a" style="left:1228px;top:758px;width:45px;height:20px;background:#fff;border:1px solid #a5a5a5"></div>
<div class="t" style="left:1231px;top:762px;font-weight:bold;color:#222">,</div>
<svg class="a" style="left:1257px;top:764px" width="12" height="8"><path d="M2,2.5 L6,6.5 L10,2.5" fill="none" stroke="#555" stroke-width="1"/></svg>
<div class="a" style="left:1314px;top:757px;width:83px;height:23px;background:#fbfbfb;border:1px solid #d3d3d3;border-bottom-color:#c0c0c0;border-radius:4px"></div>
<svg class="a" style="left:1328px;top:760px" width="20" height="18">
  <rect x="1.5" y="1.5" width="13" height="14" fill="#fbfbfb" stroke="#788898"/>
  <rect x="1.5" y="1.5" width="13" height="3.5" fill="#78b0e2" stroke="#3f67b4"/>
  <path d="M5,14 C5,10 8,8.5 11,8.5 L11,5.5 L17,9.5 L11,13.5 L11,11 C8.5,11 6.5,12 5,14 Z" fill="#5fd02a" stroke="#3aa81a" stroke-width="0.8"/>
</svg>
<div class="t" id="exp" style="left:1347.94px;top:762px;transform:scaleX(1.0645);">Export</div>

</body></html>
